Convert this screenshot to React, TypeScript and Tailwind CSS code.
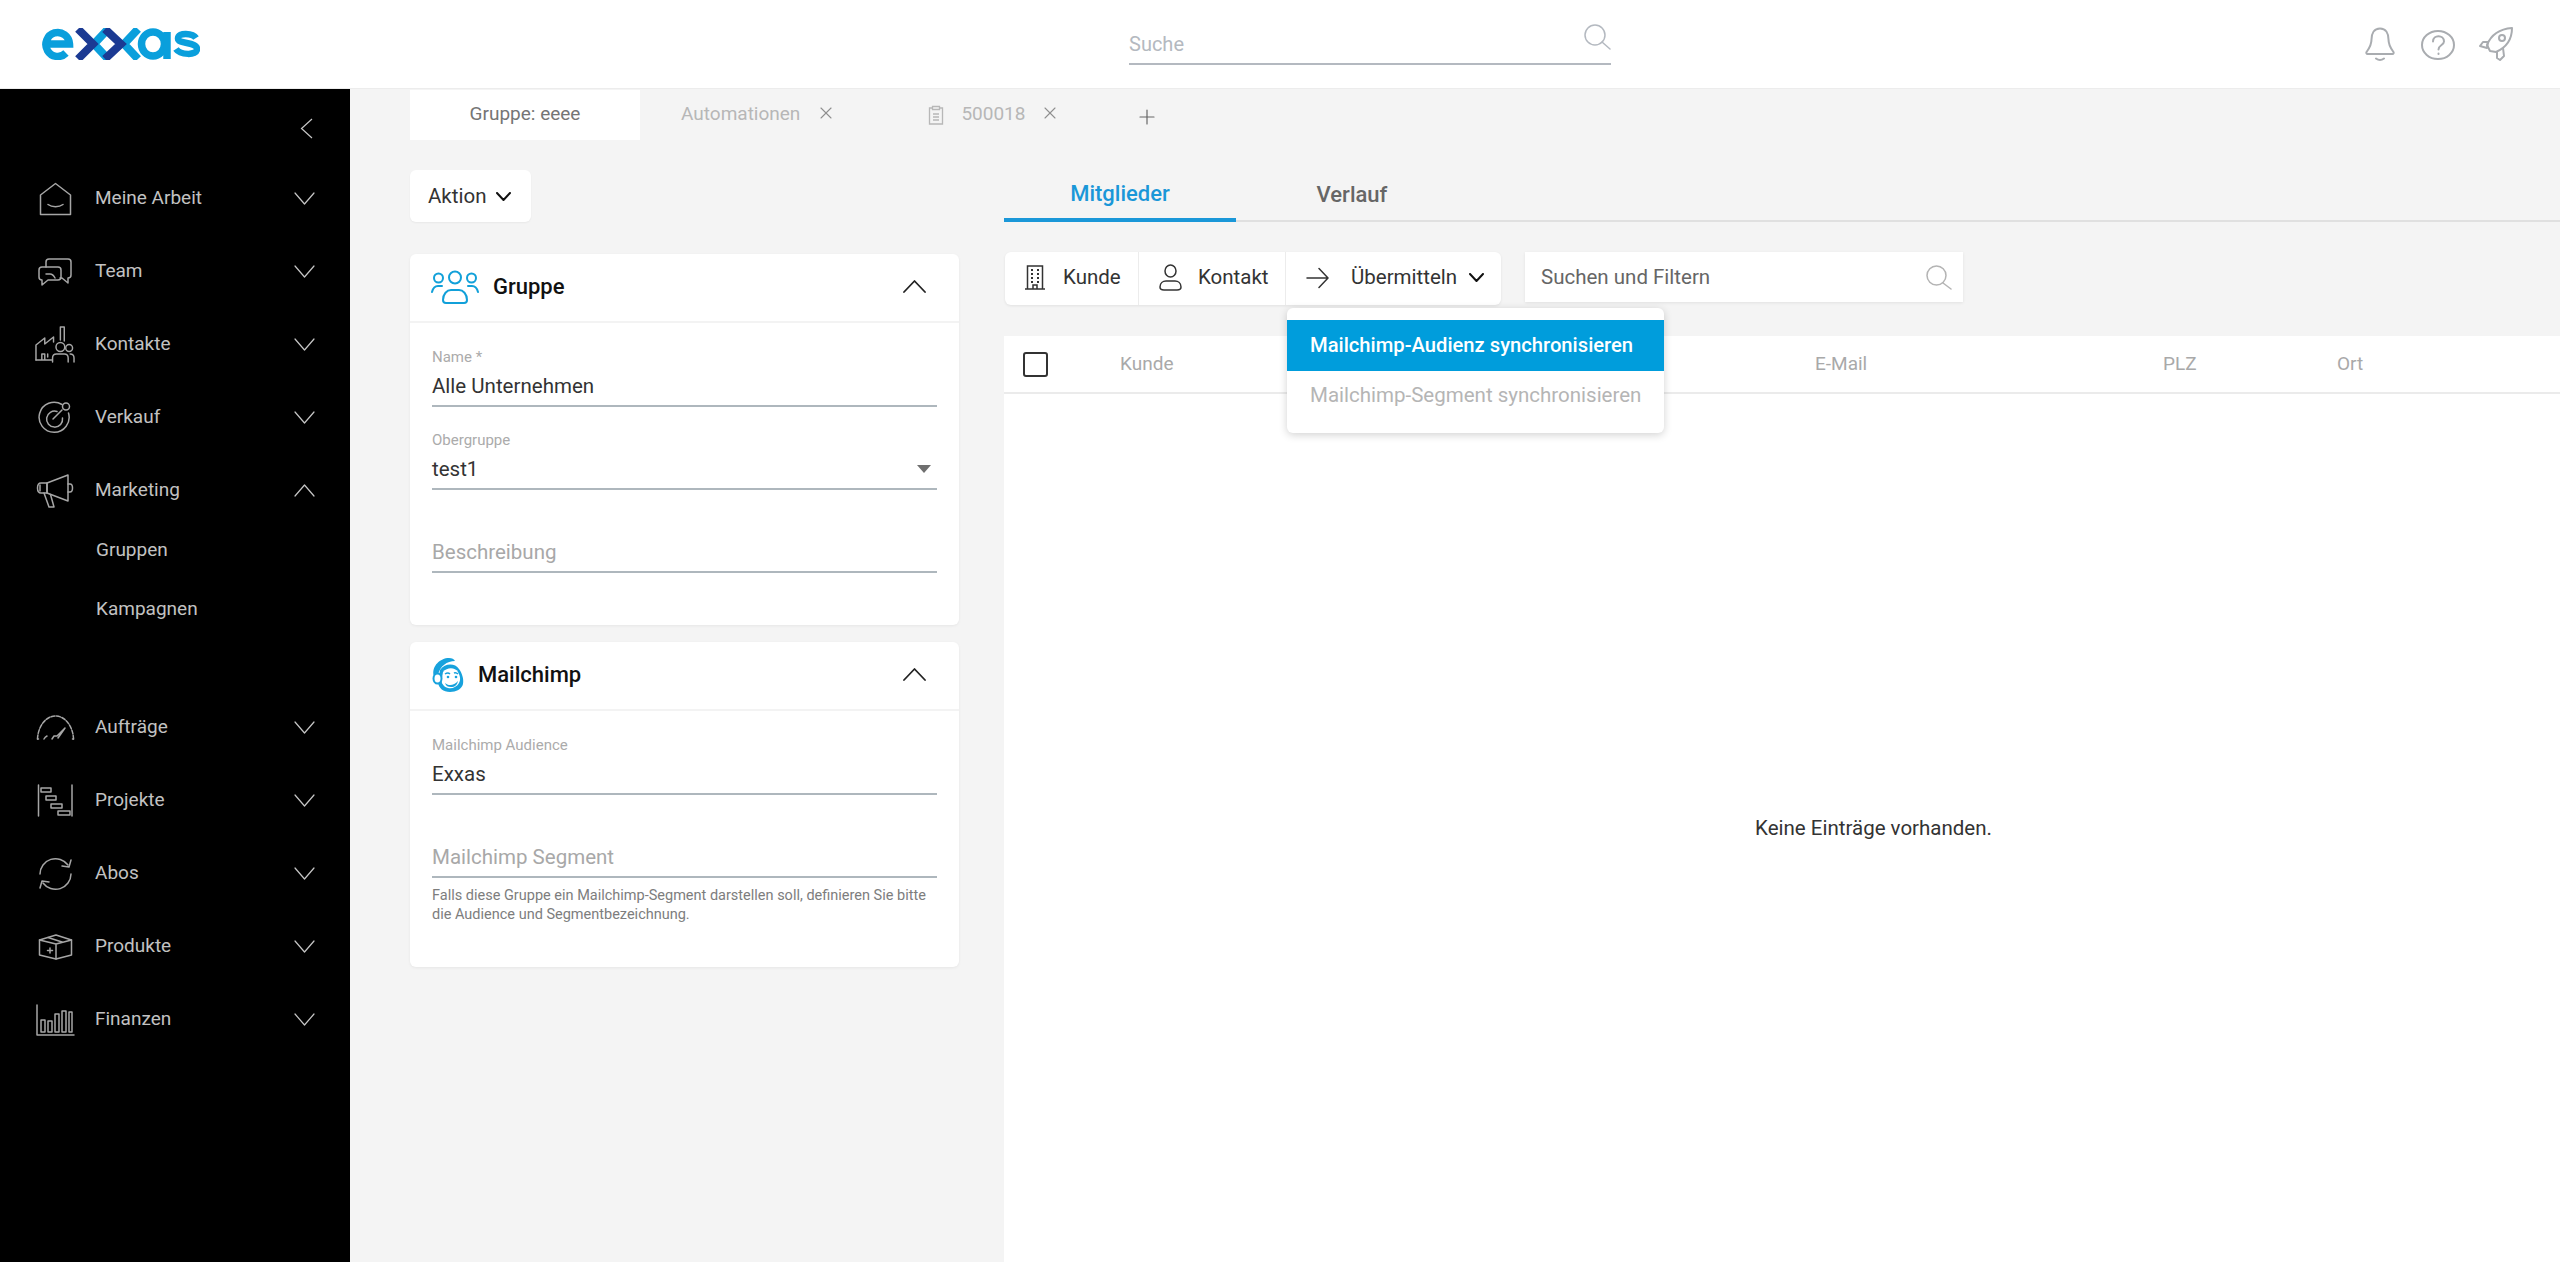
import React from 'react';
import { X, Plus } from 'lucide-react';

const font = { fontFamily: 'Roboto, sans-serif' };

const Glyph = ({ w, h, vb, children, cls = 'text-[#a6a6a6]' }: { w: number; h: number; vb: string; children: React.ReactNode; cls?: string }) => (
  <svg width={w} height={h} viewBox={vb} preserveAspectRatio="none" fill="none" stroke="currentColor" strokeWidth="1.5" strokeLinecap="round" strokeLinejoin="round" className={cls}>
    {children}
  </svg>
);

// open chevrons are wider than lucide's, so they are drawn here
const Caret = ({ w, h, up = false, weight = 1.2, cls = 'text-[#c6c6c6]' }: { w: number; h: number; up?: boolean; weight?: number; cls?: string }) => (
  <svg width={w} height={h} viewBox={`0 0 ${w} ${h}`} fill="none" stroke="currentColor" strokeWidth={weight} strokeLinecap="round" strokeLinejoin="round" className={`shrink-0 ${cls}`}>
    <path d={up ? `M1 ${h - 1}L${w / 2} 1L${w - 1} ${h - 1}` : `M1 1L${w / 2} ${h - 1}L${w - 1} 1`} />
  </svg>
);

const navIcons: Record<string, React.ReactNode> = {
  home: (
    <Glyph w={33} h={34} vb="0 0 33 34">
      <path d="M1.5 32.5V13L16.5 1.500 31.500 13v19.500z" />
      <path d="M9 22.500c4 3 11 3 15 0" />
    </Glyph>
  ),
  team: (
    <Glyph w={34} h={30} vb="0 0 34 30">
      <path d="M8 10V5q0-3 3-3h19q3 0 3 3v13q0 3-3 3v5l-6-5h-2" />
      <path d="M20 10H4q-3 0-3 3v7q0 3 3 3v5l6-5h10q3 0 3-3v-7q0-3-3-3z" />
      <path d="M8 17h4q3 0 5 4" />
    </Glyph>
  ),
  contacts: (
    <Glyph w={41} h={37} vb="0 0 41 37">
      <path d="M1 34V19l9-7v6l9-7v5" />
      <path d="M26 14V1h4v14" />
      <path d="M1 34h16M7 34v-6h3v6M13 28v3" />
      <circle cx="26" cy="21" r="4.500" />
      <circle cx="35" cy="22" r="3.500" />
      <path d="M18 36v-4q0-4 4-4h8q4 0 4 4v4M36 28q4 0 4 4v4" />
    </Glyph>
  ),
  target: (
    <Glyph w={34} h={33} vb="0 0 34 33">
      <path d="M24 3.500A15 15 0 1 0 30.500 12" />
      <path d="M19 10.500A8 8 0 1 0 24.500 17" />
      <path d="M15 18L24 9" />
      <circle cx="28" cy="5.500" r="3.500" />
    </Glyph>
  ),
  megaphone: (
    <Glyph w={38} h={36} vb="0 0 38 36">
      <path d="M11 10L32 2v26L11 20z" />
      <path d="M11 10H5q-3.500 0-3.500 5t3.500 5h6z" />
      <path d="M32 11h2q2.500 0 2.500 4t-2.500 4h-2" />
      <path d="M8 20l5 14h5l-3.500-12.500" />
      <path d="M4 12v6" />
    </Glyph>
  ),
  gauge: (
    <Glyph w={39} h={27} vb="0 0 39 27">
      <path d="M1.500 25C2 12 10 2 19.500 2S37 12 37.500 25" strokeDasharray="4 1.500" />
      <path d="M1.500 25h1M36.500 25h1" />
      <path d="M16 25l2-3h3l8-8-7 10" />
      <path d="M8 25q1-2 3-3" />
    </Glyph>
  ),
  gantt: (
    <Glyph w={36} h={33} vb="0 0 36 33">
      <path d="M1.500 1v31M35 1v31" />
      <rect x="4" y="4" width="10" height="4" />
      <rect x="9" y="12" width="10" height="4" />
      <rect x="14" y="20" width="11" height="4" />
      <rect x="21" y="27" width="12" height="4" />
    </Glyph>
  ),
  sync: (
    <Glyph w={35} h={34} vb="0 0 35 34">
      <path d="M2 17A15.500 15.500 0 0 1 30 8" />
      <path d="M33 17A15.500 15.500 0 0 1 5 26" />
      <path d="M33 3l-2 7-7-1M2 31l2-7 7 1" />
    </Glyph>
  ),
  box: (
    <Glyph w={35} h={26} vb="0 0 35 26">
      <path d="M1.500 6L18 1l15.500 5v15L18 25 1.500 21z" />
      <path d="M1.500 6L18 10l15.500-4M18 10v15" />
      <path d="M10 3.500l14 4.500M12 19v-5M9.500 16.500h5" />
    </Glyph>
  ),
  bars: (
    <Glyph w={39} h={32} vb="0 0 39 32">
      <path d="M1 1v30h37" />
      <rect x="5" y="16" width="4" height="12" />
      <rect x="12" y="17" width="4" height="11" />
      <rect x="19" y="10" width="4" height="18" />
      <rect x="26" y="7" width="4" height="21" />
      <rect x="33" y="8" width="3" height="20" />
    </Glyph>
  ),
};

const NavItem = ({ icon, label, open = false }: { icon: string; label: string; open?: boolean }) => (
  <div className="flex h-[73px] items-center pl-[35px] pr-[35px]">
    <div className="flex w-[40px] justify-center">{navIcons[icon]}</div>
    <span className="ml-[20px] flex-1 text-[19px] text-[#c2c2c2]">{label}</span>
    <Caret w={21} h={13} up={open} />
  </div>
);

const Sidebar = () => (
  <aside className="relative flex w-[350px] shrink-0 flex-col bg-black pt-[73px]">
    <div className="absolute left-[300px] top-[29px]">
      <svg width="13" height="21" viewBox="0 0 13 21" fill="none" stroke="currentColor" strokeWidth="1.200" className="text-[#c6c6c6]">
        <path d="M12 1L1.500 10.500 12 20" />
      </svg>
    </div>
    <NavItem icon="home" label="Meine Arbeit" />
    <NavItem icon="team" label="Team" />
    <NavItem icon="contacts" label="Kontakte" />
    <NavItem icon="target" label="Verkauf" />
    <NavItem icon="megaphone" label="Marketing" open />
    <div className="flex h-[46px] items-center pl-[96px] text-[19px] text-[#c2c2c2]">Gruppen</div>
    <div className="flex h-[73px] items-center pl-[96px] text-[19px] text-[#c2c2c2]">Kampagnen</div>
    <div className="h-[45px]" />
    <NavItem icon="gauge" label="Aufträge" />
    <NavItem icon="gantt" label="Projekte" />
    <NavItem icon="sync" label="Abos" />
    <NavItem icon="box" label="Produkte" />
    <NavItem icon="bars" label="Finanzen" />
  </aside>
);

const Logo = () => (
  <svg width="158" height="32" viewBox="0 0 158 32" fill="none" strokeWidth="7.5">
    <path d="M4 16h23.500A11.800 12 0 1 0 24 25" stroke="#0a9fdc" />
    <path d="M66 1L52 16l14 15" stroke="#0a9fdc" strokeWidth="8" />
    <path d="M36 1l15 15-15 15" stroke="#1b3a93" strokeWidth="8" />
    <path d="M96 1L82 16l14 15" stroke="#0a9fdc" strokeWidth="8" />
    <path d="M63 1l16 15-16 15" stroke="#1b3a93" strokeWidth="8" />
    <ellipse cx="111" cy="16" rx="11.500" ry="12" stroke="#0a9fdc" />
    <path d="M125 4v27" stroke="#0a9fdc" />
    <path d="M154 10c-3-5-18-6-18 .5 0 6 19 3 19 10.500 0 7-17 6-21 0" stroke="#0a9fdc" strokeWidth="6.5" />
  </svg>
);

const Header = () => (
  <header className="flex h-[89px] shrink-0 items-center border-b border-[#ececec] bg-white">
    <div className="ml-[42px]">
      <Logo />
    </div>
    <div className="ml-[929px] flex h-[42px] w-[482px] items-end justify-between border-b-2 border-[#b4b9c0] pb-[7px]">
      <span className="text-[20px] leading-[24px] text-[#b4b9c0]">Suche</span>
      <svg width="27" height="26" viewBox="0 0 27 26" fill="none" stroke="#b4b9c0" strokeWidth="1.5" className="mb-[6px]">
        <ellipse cx="11" cy="11" rx="10" ry="10" />
        <path d="M18 18l8 7" strokeLinecap="round" />
      </svg>
    </div>
    <div className="ml-auto mr-[47px] flex items-center gap-[26px] text-[#a9acb0]">
      <svg width="30" height="36" viewBox="0 0 30 36" fill="none" stroke="currentColor" strokeWidth="2" strokeLinejoin="round" strokeLinecap="round" className="ml-[2px]">
        <path d="M15 2.500c-6 0-8.500 5-8.500 11 0 6-2.500 9-5 12.500-.5 1 0 2 1 2h25c1 0 1.500-1 1-2-2.500-3.500-5-6.500-5-12.500 0-6-2.500-11-8.500-11z" />
        <path d="M11 32.500q4 3 8 0" />
      </svg>
      <svg width="34" height="30" viewBox="0 0 34 30" fill="none" stroke="currentColor" strokeWidth="2" strokeLinecap="round" className="mt-[2px]">
        <ellipse cx="17" cy="15" rx="16" ry="14" />
        <path d="M12 11.500c0-7 11-7 11 0 0 3.500-5.500 3.500-5.500 8" />
        <path d="M17.500 23.500v.5" />
      </svg>
      <svg width="34" height="34" viewBox="0 0 34 34" fill="none" stroke="currentColor" strokeWidth="2" strokeLinejoin="round" className="-ml-[2px]">
        <path d="M11 24L8 18C12 8 20 2 33 1c0 13-7 20-16 24z" />
        <circle cx="23" cy="11" r="3" />
        <path d="M9 15H4L1 19l7 2zM18 25v6l3 2 4-4-1-8" />
      </svg>
    </div>
  </header>
);

const Field = ({ label, value, muted = false, className = '', children }: { label?: string; value: string; muted?: boolean; className?: string; children?: React.ReactNode }) => (
  <div className={className}>
    {label && <div className="mb-[6px] text-[15px] leading-[18px] text-[#ababab]">{label}</div>}
    <div className={`flex items-center justify-between border-b-2 border-[#aeb7bd] pb-[5px] text-[20.5px] leading-[28px] ${muted ? 'text-[#a8a8a8]' : 'text-[#333]'}`}>
      <span>{value}</span>
      {children}
    </div>
  </div>
);

const Card = ({ icon, title, className = '', children }: { icon: React.ReactNode; title: string; className?: string; children: React.ReactNode }) => (
  <section className={`w-[549px] rounded-md bg-white shadow-[0_1px_3px_rgba(0,0,0,0.06)] ${className}`}>
    <div className="flex h-[69px] items-center border-b-2 border-[#f3f3f3] pb-[2px] pl-[21px] pr-[33px]">
      {icon}
      <span className="ml-[14px] flex-1 text-[22px] font-medium text-[#111]">{title}</span>
      <Caret w={23} h={13} up weight={1.8} cls="text-[#222]" />
    </div>
    {children}
  </section>
);

const GroupIcon = () => (
  <svg width="48" height="34" viewBox="0 0 48 34" fill="none" stroke="#11a0d9" strokeWidth="2" strokeLinecap="round">
    <circle cx="24" cy="7.500" r="6" />
    <circle cx="7.500" cy="8" r="4.500" />
    <circle cx="40.500" cy="8" r="4.500" />
    <path d="M15 33h18c2 0 3-1 3-3 0-6-4-10-8-10h-8c-4 0-8 4-8 10 0 2 1 3 3 3z" />
    <path d="M1 22c1-4 3-6 6-6h4M47 22c-1-4-3-6-6-6h-4" />
  </svg>
);

const ChimpIcon = () => (
  <svg width="33" height="35" viewBox="0 0 33 35" className="shrink-0">
    <path d="M9 13C14 6 24 6 28 12c3 4 5 10 4 15-1 5-7 8-13 8-7 0-11-4-12-9z" fill="#17a2dd" />
    <path d="M12 15c4-5 12-5 15 0 2 4 3 7 1 11-2 4-7 6-11 5-4-1-6-4-6.500-7z" fill="#fff" />
    <path d="M2.500 18C1 9 9 1 18 1c3 0 5 1 6 3C16 4 9 9 7 18z" fill="#17a2dd" />
    <ellipse cx="6.500" cy="21.500" rx="4" ry="5" fill="#fff" stroke="#17a2dd" strokeWidth="2" />
    <path d="M14 17q3-2 5 0M23 16q2-1 4 1" stroke="#17a2dd" strokeWidth="1.5" fill="none" />
    <circle cx="17" cy="20" r="1.300" fill="#17a2dd" />
    <circle cx="25" cy="20" r="1.300" fill="#17a2dd" />
    <path d="M14 26c3 3 9 3 13-2-1 4-3 6-7 6-3 0-5-1-6-4z" fill="#17a2dd" />
  </svg>
);

const TabBar = () => (
  <div className="flex h-[51px] items-center pl-[60px] text-[19px]">
    <div className="flex h-[50px] w-[230px] items-center justify-center self-end bg-white pb-[2px] text-[#757575]">Gruppe: eeee</div>
    <span className="ml-[41px] text-[#b7b7b7]">Automationen</span>
    <X size={20} strokeWidth={1.300} className="mb-[4px] ml-[16px] text-[#8f8f8f]" />
    <svg width="16" height="20" viewBox="0 0 16 20" fill="none" stroke="#b7b7b7" strokeWidth="1.3" className="ml-[92px]">
      <path d="M4 3H1.500v16h13V3H12" />
      <path d="M4.500 1.500h7v3h-7zM5 9h6M5 12h6M5 15h6" />
    </svg>
    <span className="ml-[17px] text-[#b7b7b7]">500018</span>
    <X size={20} strokeWidth={1.300} className="mb-[4px] ml-[15px] text-[#8f8f8f]" />
    <Plus size={24} strokeWidth={1.200} className="ml-[75px] mt-[4px] text-[#666]" />
  </div>
);

const LeftColumn = () => (
  <div className="ml-[60px] w-[549px] shrink-0">
    <div className="mt-[30px] flex h-[52px] w-[121px] items-center rounded-md bg-white pl-[18px] text-[20.5px] text-[#333] shadow-[0_1px_2px_rgba(0,0,0,0.05)]">
      Aktion
      <Caret w={15} h={9} weight={2} cls="ml-[10px] text-[#111]" />
    </div>
    <Card icon={<GroupIcon />} title="Gruppe" className="mt-[32px] h-[371px]">
      <div className="px-[22px] pt-[25px]">
        <Field label="Name *" value="Alle Unternehmen" />
        <Field label="Obergruppe" value="test1" className="mt-[24px]">
          <span className="mr-[6px] h-0 w-0 border-x-[7px] border-t-[8px] border-x-transparent border-t-[#6f6f6f]" />
        </Field>
        <Field value="Beschreibung" muted className="mt-[48px]" />
      </div>
    </Card>
    <Card icon={<ChimpIcon />} title="Mailchimp" className="mt-[17px] h-[325px]">
      <div className="px-[22px] pt-[25px]">
        <Field label="Mailchimp Audience" value="Exxas" />
        <Field value="Mailchimp Segment" muted className="mt-[48px]" />
        <p className="mt-[8px] text-[14.5px] leading-[19px] text-[#7d7d7d]">
          Falls diese Gruppe ein Mailchimp-Segment darstellen soll, definieren Sie bitte die Audience und Segmentbezeichnung.
        </p>
      </div>
    </Card>
  </div>
);

const ToolButton = ({ icon, label, className = '', children }: { icon: React.ReactNode; label: string; className?: string; children?: React.ReactNode }) => (
  <div className={`flex items-center pb-[2px] ${className}`}>
    {icon}
    <span className="text-[20.5px] text-[#333]">{label}</span>
    {children}
  </div>
);

const Toolbar = () => (
  <div className="relative mt-[30px] flex items-start pl-[1px]">
    <div className="flex h-[53px] w-[496px] rounded-md bg-white shadow-[0_1px_3px_rgba(0,0,0,0.08)]">
      <ToolButton
        className="w-[134px] border-r border-[#ececec] pl-[19px]"
        label="Kunde"
        icon={
          <svg width="22" height="25" viewBox="0 0 22 25" fill="none" stroke="#333" strokeWidth="1.5" className="mr-[17px]">
            <path d="M3.500 24V1h15v23M1 24h20M9 24v-4h4v4" />
            <path d="M7 5h2M13 5h2M7 9h2M13 9h2M7 13h2M13 13h2M7 17h2M13 17h2" strokeWidth="2" />
          </svg>
        }
      />
      <ToolButton
        className="w-[147px] border-r border-[#ececec] pl-[20px]"
        label="Kontakt"
        icon={
          <svg width="23" height="27" viewBox="0 0 23 27" fill="none" stroke="#333" strokeWidth="1.5" className="mr-[16px]">
            <ellipse cx="11.500" cy="7" rx="5.500" ry="6" />
            <path d="M5 26h13q4 0 4-3c0-4-3-6-6-6H7c-3 0-6 2-6 6q0 3 4 3z" />
          </svg>
        }
      />
      <ToolButton
        className="flex-1 pl-[20px]"
        label="Übermitteln"
        icon={
          <svg width="23" height="22" viewBox="0 0 23 22" fill="none" stroke="#333" strokeWidth="1.5" strokeLinecap="round" className="mr-[22px]">
            <path d="M1 11h21M13 1.500L22 11l-9 9.500" />
          </svg>
        }
      >
        <Caret w={15} h={9} weight={2} cls="ml-[12px] text-[#111]" />
      </ToolButton>
    </div>
    <div className="ml-[24px] flex h-[50px] w-[438px] items-center justify-between bg-white pl-[16px] pr-[11px] shadow-[0_1px_3px_rgba(0,0,0,0.08)]">
      <span className="text-[20.5px] text-[#666]">Suchen und Filtern</span>
      <svg width="26" height="25" viewBox="0 0 26 25" fill="none" stroke="#b4b4b4" strokeWidth="1.5" strokeLinecap="round">
        <ellipse cx="10.500" cy="10.500" rx="9.500" ry="9.500" />
        <path d="M17 18l8 6" />
      </svg>
    </div>
    <div className="absolute left-[283px] top-[56px] z-10 h-[125px] w-[377px] rounded-md bg-white pt-[12px] shadow-[0_2px_8px_rgba(0,0,0,0.18)]">
      <div className="flex h-[51px] items-center bg-[#009ddc] pl-[23px] text-[20.2px] font-medium text-white">Mailchimp-Audienz synchronisieren</div>
      <div className="flex h-[48px] items-center pl-[23px] text-[20.5px] text-[#b5b5b5]">Mailchimp-Segment synchronisieren</div>
    </div>
  </div>
);

const Members = () => (
  <div className="mt-[31px] flex flex-1 flex-col bg-white">
    <div className="flex h-[58px] shrink-0 items-center border-b-2 border-[#ebebeb] text-[19px] text-[#a9a9a9]">
      <div className="w-[116px] pl-[19px]">
        <div className="h-[25px] w-[25px] rounded-[3px] border-2 border-[#333]" />
      </div>
      <div className="w-[695px]">Kunde</div>
      <div className="w-[348px]">E-Mail</div>
      <div className="w-[174px]">PLZ</div>
      <div>Ort</div>
    </div>
    <div className="flex flex-1 items-center justify-center pl-[183px] text-[20.5px] text-[#333]">Keine Einträge vorhanden.</div>
  </div>
);

const RightColumn = () => (
  <div className="ml-[45px] flex min-w-0 flex-1 flex-col">
    <div className="flex h-[82px] shrink-0 items-end border-b-2 border-[#e0e0e0] text-[22px] font-medium">
      <div className="-mb-[2px] flex h-[56px] w-[232px] items-center justify-center border-b-4 border-[#1a97d8] pt-[2px] text-[#1a97d8]">Mitglieder</div>
      <div className="flex h-[54px] w-[232px] items-center justify-center pt-[2px] text-[#666]">Verlauf</div>
    </div>
    <Toolbar />
    <Members />
  </div>
);

export default function App() {
  return (
    <div className="flex h-screen flex-col overflow-hidden bg-[#f4f4f4]" style={font}>
      <Header />
      <div className="flex min-h-0 flex-1">
        <Sidebar />
        <main className="flex min-w-0 flex-1 flex-col">
          <TabBar />
          <div className="flex min-h-0 flex-1">
            <LeftColumn />
            <RightColumn />
          </div>
        </main>
      </div>
    </div>
  );
}
